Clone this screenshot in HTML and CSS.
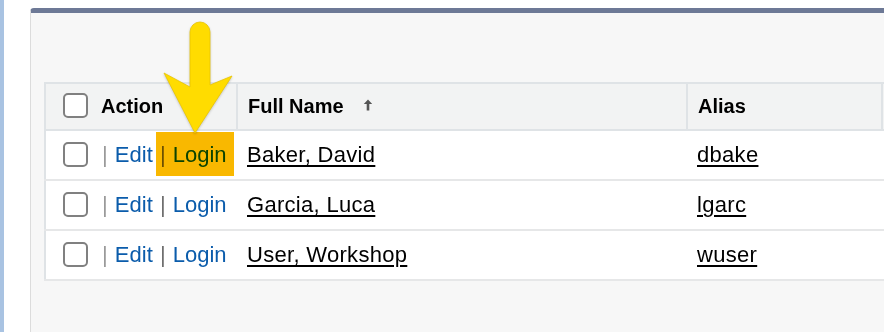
FILE: index.html
```html
<!DOCTYPE html>
<html lang="en">
<head>
    <meta charset="UTF-8">
    <meta name="viewport" content="width=device-width, initial-scale=1.0">
    <title>Users</title>
    <link rel="stylesheet" href="styles.css">
</head>
<body>
    <div class="strip"></div>
    <div class="main">
        <div class="panel">
            <table class="list">
                <thead>
                    <tr>
                        <th class="col-action">
                            <div class="actions"><span class="checkbox"></span>Action</div>
                        </th>
                        <th class="col-name">Full Name <svg class="sort" width="10" height="12" viewBox="0 0 10 12"><path d="M5 0.5 L9.2 5 L6.3 5 L6.3 11.5 L3.7 11.5 L3.7 5 L0.8 5 Z" fill="#555"/></svg></th>
                        <th class="col-alias">Alias</th>
                        <th class="col-more"></th>
                    </tr>
                </thead>
                <tbody>
                    <tr>
                        <td><div class="actions"><span class="checkbox"></span><span class="pipe">|</span> <a href="#">Edit</a> <span class="pipe dark">|</span> <a href="#">Login</a></div></td>
                        <td><a class="name" href="#">Baker, David</a></td>
                        <td><a class="name" href="#">dbake</a></td>
                        <td></td>
                    </tr>
                    <tr>
                        <td><div class="actions"><span class="checkbox"></span><span class="pipe">|</span> <a href="#">Edit</a> <span class="pipe dark">|</span> <a href="#">Login</a></div></td>
                        <td><a class="name" href="#">Garcia, Luca</a></td>
                        <td><a class="name" href="#">lgarc</a></td>
                        <td></td>
                    </tr>
                    <tr>
                        <td><div class="actions"><span class="checkbox"></span><span class="pipe">|</span> <a href="#">Edit</a> <span class="pipe dark">|</span> <a href="#">Login</a></div></td>
                        <td><a class="name" href="#">User, Workshop</a></td>
                        <td><a class="name" href="#">wuser</a></td>
                        <td></td>
                    </tr>
                </tbody>
            </table>
        </div>
    </div>

    <!-- annotation: highlight box + arrow -->
    <div class="highlight"></div>
    <svg class="arrow" width="90" height="125" viewBox="0 0 90 125">
        <path d="M35 17 A10 10 0 0 1 55 17 L55 70 L77 61 L40 118 L9 58 L35 72 Z" fill="#ffdc00" stroke="#e8c400" stroke-width="0.8" stroke-linejoin="round"/>
    </svg>
</body>
</html>
```

FILE: styles.css
```css
* {
    margin: 0;
    padding: 0;
    box-sizing: border-box;
}

body {
    display: flex;
    width: 884px;
    height: 332px;
    overflow: hidden;
    background: #fff;
    font-family: "Liberation Sans", Arial, sans-serif;
    color: #000;
    position: relative;
}

.strip {
    width: 4px;
    flex-shrink: 0;
    background: #a9c3e2;
}

.main {
    padding: 8px 0 0 26px;
    flex: 1;
    min-width: 0;
    overflow: hidden;
}

.panel {
    height: 324px;
    overflow: hidden;
    background: #f7f7f7;
    border-top: 5px solid #6d7996;
    border-left: 1px solid #dcdcdc;
    border-radius: 4px 0 0 0;
    padding: 69px 0 0 13px;
}

.list {
    border-collapse: collapse;
    table-layout: fixed;
    width: 1000px;
    background: #fff;
    border-left: 2px solid #dfe3e6;
}

.list th {
    background: #f2f3f3;
    border: 2px solid #dfe3e6;
    border-left: none;
    height: 47px;
    text-align: left;
    font-size: 20px;
    font-weight: bold;
    padding: 0 0 0 10px;
    white-space: nowrap;
}

.list td {
    height: 50px;
    border-bottom: 2px solid #e6e7e8;
    font-size: 22px;
    padding: 0 0 0 10px;
    white-space: nowrap;
}

.list th.col-action,
.list td:first-child {
    padding-left: 17px;
}

.col-action { width: 192px; }
.col-name { width: 450px; }
.col-alias { width: 195px; }
.col-more { width: 163px; }

.actions {
    white-space: nowrap;
}

.list td .actions {
    word-spacing: 1px;
}

.checkbox {
    display: inline-block;
    vertical-align: middle;
    width: 25px;
    height: 25px;
    border: 2px solid #808080;
    border-radius: 5px;
    background: #fff;
    margin: -3px 13px 0 0;
}

.list td .checkbox {
    margin-right: 14px;
}

.pipe {
    color: #9a9a9a;
}

.pipe.dark {
    color: #6f6f6f;
}

.actions a {
    color: #0b5cab;
    text-decoration: none;
}

.name {
    color: #000;
    letter-spacing: 0.3px;
    text-decoration: underline;
    text-decoration-thickness: 2px;
    text-underline-offset: 3px;
}

.sort {
    margin-left: 14px;
    vertical-align: 2px;
}

.highlight {
    position: absolute;
    left: 156px;
    top: 132px;
    width: 78px;
    height: 44px;
    background: #f9b800;
    mix-blend-mode: multiply;
}

.arrow {
    position: absolute;
    left: 155px;
    top: 15px;
    filter: drop-shadow(0 1px 1px rgba(0, 0, 0, 0.2));
}
```
